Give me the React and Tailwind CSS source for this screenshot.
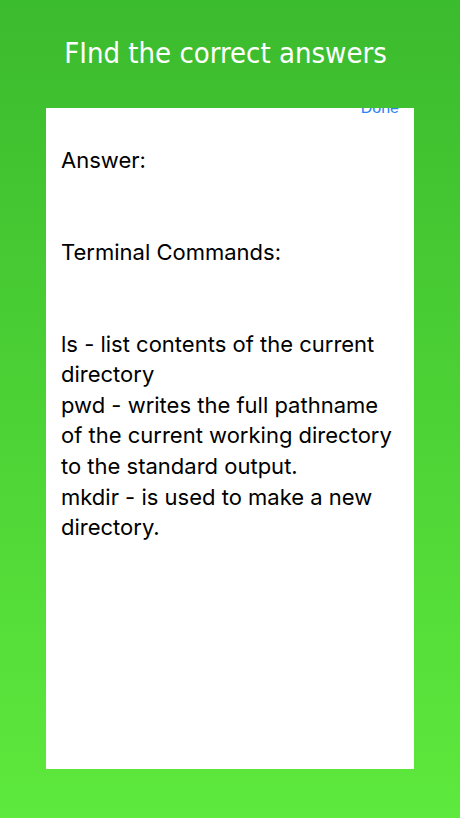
export default function App() {
  const body = `Answer:


Terminal Commands:


ls - list contents of the current directory
pwd - writes the full pathname of the current working directory to the standard output.
mkdir - is used to make a new directory.`;

  return (
    <div className="w-[460px] h-[818px] flex flex-col items-center bg-gradient-to-b from-[#3bbb2e] to-[#5ee93d]">
      <h1 className="h-[108px] pt-[33px] pr-[9px] text-white text-[29px] leading-[40px] font-['DejaVu_Sans_Condensed','DejaVu_Sans',sans-serif]">
        FInd the correct answers
      </h1>
      <div className="relative w-[368px] h-[661px] bg-white overflow-hidden">
        {/* done button sits half under the header */}
        <span className="absolute right-[15px] top-[-12px] text-[16px] text-[#2a83f2] font-['Liberation_Sans',sans-serif]">
          Done
        </span>
        <p className="whitespace-pre-wrap px-[15px] pt-[37px] text-[22px] leading-[30.6px] text-black font-['Inter',sans-serif]">
          {body}
        </p>
      </div>
    </div>
  );
}
